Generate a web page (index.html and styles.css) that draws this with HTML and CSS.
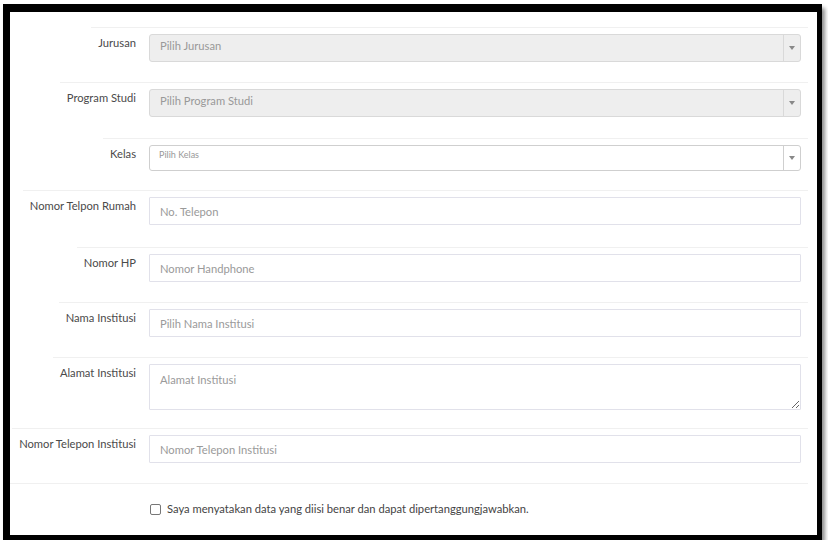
FILE: index.html
```html
<!DOCTYPE html>
<html>
<head>
<meta charset="utf-8">
<link rel="stylesheet" href="styles.css">
</head>
<body>
<div class="frame">
  <form class="form">
    <div class="row r-a">
      <div class="lab"><span>Jurusan</span></div>
      <div class="field"><div class="sel dis"><span class="val">Pilih Jurusan</span><span class="arr"><i></i></span></div></div>
    </div>
    <div class="row r-b">
      <div class="lab"><span>Program Studi</span></div>
      <div class="field"><div class="sel dis"><span class="val">Pilih Program Studi</span><span class="arr"><i></i></span></div></div>
    </div>
    <div class="row r-c">
      <div class="lab"><span>Kelas</span></div>
      <div class="field"><div class="sel small"><span class="val">Pilih Kelas</span><span class="arr"><i></i></span></div></div>
    </div>
    <div class="row r-d">
      <div class="lab"><span>Nomor Telpon Rumah</span></div>
      <div class="field"><input class="inp" type="text" placeholder="No. Telepon"></div>
    </div>
    <div class="row">
      <div class="lab"><span>Nomor HP</span></div>
      <div class="field"><input class="inp" type="text" placeholder="Nomor Handphone"></div>
    </div>
    <div class="row">
      <div class="lab"><span>Nama Institusi</span></div>
      <div class="field"><input class="inp" type="text" placeholder="Pilih Nama Institusi"></div>
    </div>
    <div class="row r-t">
      <div class="lab"><span>Alamat Institusi</span></div>
      <div class="field"><textarea class="inp ta" placeholder="Alamat Institusi"></textarea></div>
    </div>
    <div class="row">
      <div class="lab"><span>Nomor Telepon Institusi</span></div>
      <div class="field"><input class="inp" type="text" placeholder="Nomor Telepon Institusi"></div>
    </div>
    <div class="row r-chk">
      <div class="lab"><span></span></div>
      <div class="field"><label class="chk"><span class="box"></span>Saya menyatakan data yang diisi benar dan dapat dipertanggungjawabkan.</label></div>
    </div>
  </form>
</div>
</body>
</html>
```
FILE: styles.css
```css
* { box-sizing: border-box; }
html, body { margin: 0; padding: 0; background: #fff; }
body { font-family: Lato, "Open Sans", sans-serif; font-size: 11.2px; color: #4a4a4a; }

.frame {
  margin: 4px 0 0 3px;
  width: 819px;
  height: 536px;
  border-style: solid;
  border-color: #000;
  border-width: 8px 5px 5px 7px;
  background: #fff;
  box-shadow: 3px 4px 4px rgba(0,0,0,0.45);
}

.form { padding: 15px 9px 0 0; }

.row { display: flex; }

.lab { width: 139px; flex: none; display: flex; justify-content: flex-end; }
.lab span {
  display: block;
  border-top: 1px solid #f0f0f0;
  padding: 7px 13px 0 7px;
  line-height: 16px;
  white-space: nowrap;
  flex: none;
}
.field { flex: 1; border-top: 1px solid #f0f0f0; padding: 6px 7px 20px 0; }
.r-b .field { padding-bottom: 21px; }
.r-c .field { padding-bottom: 19px; }
.r-d .field { padding-bottom: 22px; }
.r-t .field { padding-bottom: 18px; }
.r-chk .lab span { flex: 1; }
.r-chk .field { padding: 17px 0 0 0; height: 52px; }

.sel {
  display: flex;
  height: 28px;
  border: 1px solid #d9d9d9;
  border-radius: 3px;
  background: #fff;
  align-items: stretch;
}
.sel.dis { background: #eeeeee; }
.sel .val { flex: 1; padding: 3px 10px 0; line-height: 16px; color: #999; }
.sel .arr { width: 17px; border-left: 1px solid #d9d9d9; display: flex; align-items: center; justify-content: center; }
.sel .arr i { width: 0; height: 0; border-left: 3px solid transparent; border-right: 3px solid transparent; border-top: 4px solid #888; }
.sel.small { height: 26px; border-color: #cfcfcf; }
.sel.small .val { font-size: 9px; line-height: 14px; padding-top: 2px; color: #999; padding-left: 9px; }
.sel.small .arr { border-left-color: #cfcfcf; }

.inp {
  display: block;
  width: 100%;
  height: 28px;
  border: 1px solid #e1e1ea;
  border-radius: 1px;
  background: #fff;
  padding: 0 10px;
  font-family: Lato, "Open Sans", sans-serif;
  font-size: 11.2px;
  color: #555;
  outline: none;
  margin: 0;
}
.inp::placeholder { color: #9a9a9a; }
.ta { height: 46px; padding: 7px 10px; line-height: 16px; resize: vertical; }

.chk { display: flex; align-items: center; line-height: 16px; color: #444; white-space: nowrap; }
.chk .box { width: 11px; height: 11px; border: 1px solid #777; border-radius: 2px; margin: 0 6px 0 1px; flex: none; }
```
